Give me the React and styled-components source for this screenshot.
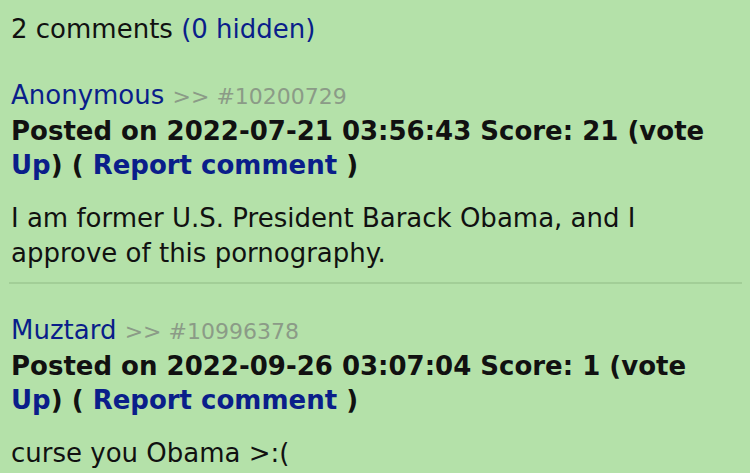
import React from 'react'
import styled, { createGlobalStyle } from 'styled-components'

const GlobalStyle = createGlobalStyle`
  html, body {
    margin: 0;
    padding: 0;
    background: #b4e1a9;
  }
  body {
    font-family: "DejaVu Sans", Verdana, sans-serif;
    color: #111;
  }
`

const Page = styled.div`
  padding: 10px 8px 0 11px;
  width: 750px;
  height: 473px;
  box-sizing: border-box;
  overflow: hidden;
`

const Heading = styled.div`
  font-size: 26px;
  line-height: 38px;
  margin-bottom: 30px;
`

const Link = styled.a`
  color: #0a1e8a;
  text-decoration: none;
`

const Comment = styled.div`
  padding-bottom: 11px;
  border-bottom: ${props => (props.last ? 'none' : '2px solid #a2ce97')};
  margin-bottom: ${props => (props.last ? 0 : '29px')};
  margin-left: ${props => (props.last ? 0 : '-2px')};
  padding-left: ${props => (props.last ? 0 : '2px')};
`

const Author = styled.div`
  font-size: 26px;
  line-height: 34px;
`

const PostId = styled.span`
  color: #8b9b87;
  font-size: 22px;
`

const Meta = styled.div`
  font-weight: bold;
  font-size: 26px;
  line-height: 34px;
  margin-bottom: 19px;
`

const Body = styled.div`
  font-size: 26px;
  line-height: 35px;
`

const comments = [
  {
    author: 'Anonymous',
    id: '10200729',
    date: '2022-07-21 03:56:43',
    score: 21,
    text: 'I am former U.S. President Barack Obama, and I approve of this pornography.',
  },
  {
    author: 'Muztard',
    id: '10996378',
    date: '2022-09-26 03:07:04',
    score: 1,
    text: 'curse you Obama >:(',
  },
]

const App = () => (
  <>
    <GlobalStyle />
    <Page>
      <Heading>
        2 comments <Link href="#">(0 hidden)</Link>
      </Heading>
      {comments.map((c, i) => (
        <Comment key={c.id} last={i === comments.length - 1}>
          <Author>
            <Link href="#">{c.author}</Link> <PostId>&gt;&gt; #{c.id}</PostId>
          </Author>
          <Meta>
            Posted on {c.date} Score: {c.score} (vote <Link href="#">Up</Link>) ({' '}
            <Link href="#">Report comment</Link> )
          </Meta>
          <Body>{c.text}</Body>
        </Comment>
      ))}
    </Page>
  </>
)

export default App
